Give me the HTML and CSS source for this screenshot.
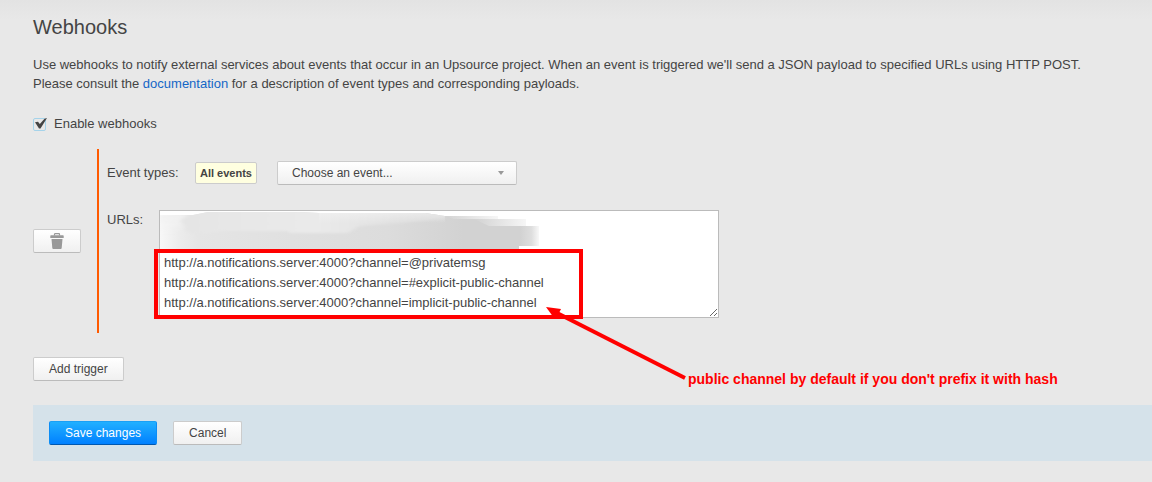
FILE: index.html
```html
<!DOCTYPE html>
<html lang="en">
<head>
<meta charset="utf-8">
<title>Webhooks</title>
<link rel="stylesheet" href="styles.css">
</head>
<body>
<main class="page">
  <h1 class="title">Webhooks</h1>
  <p class="intro">Use webhooks to notify external services about events that occur in an Upsource project. When an event is triggered we'll send a JSON payload to specified URLs using HTTP POST.<br>Please consult the <a class="link" href="#documentation">documentation</a> for a description of event types and corresponding payloads.</p>
  <form class="form">
    <label class="enable" for="enable">
      <span class="tick">
        <input class="tick-input" type="checkbox" id="enable" checked>
        <svg class="tick-mark" viewBox="0 0 14 14" aria-hidden="true"><path d="M2 4.200L5 3.700L6.800 6L11.500 .8L14 0L7.500 10.500H6Z" fill="#444"/></svg>
      </span>
      Enable webhooks
    </label>
    <section class="trigger">
      <button class="button delete" type="button" aria-label="Delete trigger">
        <svg class="trash" viewBox="0 0 14 16" aria-hidden="true"><path d="M4.500 2.500V1.200Q4.500 .7 5 .7H9Q9.500 .7 9.500 1.200V2.500" fill="none" stroke="#999" stroke-width="1.200"/><path d="M1 2.300H13Q13.700 2.300 13.700 3V5H.3V3Q.3 2.300 1 2.300ZM1.500 6H12.500L11.700 15Q11.600 16 10.700 16H3.300Q2.400 16 2.300 15Z" fill="#999"/></svg>
      </button>
      <div class="fields">
        <div class="row">
          <label class="events-label" for="event">Event types:</label>
          <span class="chip">All events</span>
          <span class="picker">
            <select class="select" id="event"><option>Choose an event...</option></select>
            <svg class="caret" viewBox="0 0 6 4" aria-hidden="true"><path d="M0 0H6L3 4Z" fill="#999"/></svg>
          </span>
        </div>
        <div class="row urls">
          <label class="urls-label" for="urls">URLs:</label>
          <div class="url-box">
            <textarea class="textarea" id="urls" spellcheck="false">http://a.notifications.server:4000?channel=@privatemsg
http://a.notifications.server:4000?channel=#explicit-public-channel
http://a.notifications.server:4000?channel=implicit-public-channel</textarea>
            <svg class="markup" viewBox="0 0 540 180" aria-hidden="true">
              <defs>
                <linearGradient id="smudge" gradientUnits="userSpaceOnUse" x1="6" x2="385">
                  <stop offset="0" stop-color="#f8f8f8"/>
                  <stop offset=".05" stop-color="#ececec"/>
                  <stop offset=".1" stop-color="#e5e5e5"/>
                  <stop offset=".35" stop-color="#e0e0e0"/>
                  <stop offset=".6" stop-color="#dcdcdc"/>
                  <stop offset=".8" stop-color="#d2d2d2"/>
                  <stop offset=".95" stop-color="#d2d2d2"/>
                  <stop offset=".98" stop-color="#dedede"/>
                  <stop offset="1" stop-color="#f8f8f8"/>
                </linearGradient>
                <linearGradient id="band" gradientUnits="userSpaceOnUse" x1="20" x2="300">
                  <stop offset="0" stop-color="#e4e4e4"/>
                  <stop offset=".2" stop-color="#e7e7e7"/>
                  <stop offset=".5" stop-color="#eaeaea"/>
                  <stop offset=".7" stop-color="#e4e4e4"/>
                  <stop offset="1" stop-color="#d8d8d8"/>
                </linearGradient>
                <linearGradient id="edge" x2="0" y2="1">
                  <stop offset="0" stop-color="#f2f2f2"/>
                  <stop offset="1" stop-color="#f2f2f2" stop-opacity="0"/>
                </linearGradient>
                <linearGradient id="fade">
                  <stop offset="0" stop-color="#f6f6f6" stop-opacity="0"/>
                  <stop offset="1" stop-color="#f6f6f6"/>
                </linearGradient>
                <filter id="soft"><feGaussianBlur stdDeviation="2 1"/></filter>
                <clipPath id="shape"><path d="M6 6H39L54 3H145L165 4H271L291 7H344V10H372V17H385V37H365V40L240 42L200 43H45L34 41H6Z"/></clipPath>
              </defs>
              <g clip-path="url(#shape)">
                <path d="M6 0H385V44H6Z" fill="url(#smudge)"/>
                <g filter="url(#soft)">
                  <path d="M26 8L40 0H280L291 9L250 14L205 17L194 24H135V22H70L54 24L40 26L30 20Z" fill="url(#band)"/>
                  <path d="M6 6H34L26 12L32 18L24 24H6Z" fill="url(#edge)"/>
                </g>
                <path d="M165 4H291V14H165Z" fill="url(#edge)" opacity=".6"/>
                <path d="M291 7H344V10H300Z" fill="url(#fade)"/>
                <path d="M320 10H372V17H335Z" fill="url(#fade)"/>
              </g>
              <rect x="2" y="42" width="425" height="66" fill="none" stroke="#f00" stroke-width="4"/>
              <path d="M403 104L531 169" stroke="#f00" stroke-width="4" fill="none"/>
              <path d="M392 98L407 100L405 104L400 109Z" fill="#f00"/>
            </svg>
            <span class="note">public channel by default if you don't prefix it with hash</span>
          </div>
        </div>
      </div>
    </section>
    <button class="button add" type="button">Add trigger</button>
    <footer class="actions">
      <button class="button primary" type="submit">Save changes</button>
      <button class="button" type="button">Cancel</button>
    </footer>
  </form>
</main>
</body>
</html>
```
FILE: styles.css
```css
* { box-sizing: border-box; }
body {
  margin: 0;
  background: #e8e8e8 linear-gradient(#e3e3e3, #e8e8e8) 0 0 / 100% 20px no-repeat;
  color: #444;
  font: 13px/20px "Liberation Sans", Arial, sans-serif;
}
.page { padding: 15px 0 21px 33px; }
.title { margin: 0 0 16px; font-size: 20px; line-height: 24px; font-weight: normal; }
.intro { margin: 0 0 21px; line-height: 19px; }
.link { color: #1466c6; text-decoration: none; }
.form { display: flex; flex-direction: column; align-items: flex-start; }
.enable { display: flex; align-items: center; gap: 8px; }
.tick { position: relative; display: flex; }
.tick-input {
  appearance: none;
  width: 13px;
  height: 13px;
  margin: 0;
  border: 1px solid #a5d3ea;
  border-radius: 2px;
}
.tick-mark { position: absolute; left: 0; top: 0; width: 14px; height: 14px; pointer-events: none; }
.trigger { display: flex; align-items: center; gap: 16px; margin: 15px 0 24px; }
.button {
  height: 24px;
  padding: 0 15px;
  border: 1px solid #ccc;
  border-bottom-color: #bbb;
  border-radius: 2px;
  background: linear-gradient(#fff, #f0f0f0);
  color: #444;
  font: 12px/20px "Liberation Sans", Arial, sans-serif;
}
.delete { display: flex; align-items: center; justify-content: center; width: 48px; }
.trash { width: 14px; height: 16px; }
.fields { padding: 12px 0 15px 8px; border-left: 2px solid #ff5a00; }
.row { display: flex; align-items: center; }
.events-label { width: 88px; }
.chip {
  height: 22px;
  padding: 0 4px;
  border: 1px solid #ccc;
  border-radius: 2px;
  background: #ffffe0;
  font-size: 11px;
  font-weight: bold;
}
.picker { position: relative; margin-left: 20px; }
.select {
  display: block;
  appearance: none;
  width: 240px;
  height: 24px;
  padding: 0 14px;
  border: 1px solid #ccc;
  border-bottom-color: #bbb;
  border-radius: 2px;
  background: linear-gradient(#fff, #f0f0f0);
  color: #444;
  font: 12px "Liberation Sans", Arial, sans-serif;
}
.caret { position: absolute; right: 13px; top: 10px; width: 6px; height: 4px; pointer-events: none; }
.urls { align-items: flex-start; margin-top: 25px; }
.urls-label { width: 52px; }
.url-box { position: relative; }
.textarea {
  display: block;
  width: 560px;
  height: 108px;
  padding: 42px 4px 4px;
  border: 1px solid #bbb;
  background: #fff;
  color: #444;
  font: 13px/20px "Liberation Sans", Arial, sans-serif;
}
.markup { position: absolute; left: -5px; top: -1px; width: 540px; height: 180px; pointer-events: none; }
.note {
  position: absolute;
  left: 529px;
  top: 159px;
  color: #f00;
  font-size: 14px;
  font-weight: bold;
  white-space: nowrap;
}
.actions { display: flex; gap: 16px; align-self: stretch; margin-top: 24px; padding: 16px; background: #d5e2ea; }
.primary {
  border-color: #1aa0f5 #0b8df5 #0058b0;
  background: linear-gradient(#21b0ff, #0080ff);
  color: #fff;
}
```
